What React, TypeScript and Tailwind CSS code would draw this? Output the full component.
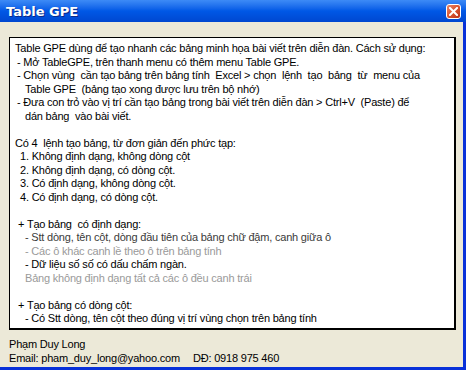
type Line = { text: string; indent: number; tone?: 'dim' | 'soft' };

const lines: Line[] = [
  { text: 'Table GPE dùng để tạo nhanh các bảng minh họa bài viết trên diễn đàn. Cách sử dụng:', indent: 0 },
  { text: '- Mở TableGPE, trên thanh menu có thêm menu Table GPE.', indent: 2 },
  { text: '- Chọn vùng  cần tạo bảng trên bảng tính  Excel > chọn  lệnh  tạo  bảng  từ  menu của', indent: 2 },
  { text: 'Table GPE  (bảng tạo xong được lưu trên bộ nhớ)', indent: 10 },
  { text: '- Đưa con trỏ vào vị trí cần tạo bảng trong bài viết trên diễn đàn > Ctrl+V  (Paste) để', indent: 2 },
  { text: 'dán bảng  vào bài viết.', indent: 10 },
  { text: '', indent: 0 },
  { text: 'Có 4  lệnh tạo bảng, từ đơn giản đến phức tạp:', indent: 0 },
  { text: '1. Không định dạng, không dòng cột', indent: 5 },
  { text: '2. Không định dạng, có dòng cột.', indent: 5 },
  { text: '3. Có định dạng, không dòng cột.', indent: 5 },
  { text: '4. Có định dạng, có dòng cột.', indent: 5 },
  { text: '', indent: 0 },
  { text: '+ Tạo bảng  có định dạng:', indent: 3 },
  { text: '- Stt dòng, tên cột, dòng đầu tiên của bảng chữ đậm, canh giữa ô', indent: 10, tone: 'soft' },
  { text: '- Các ô khác canh lề theo ô trên bảng tính', indent: 10, tone: 'dim' },
  { text: '- Dữ liệu số số có dấu chấm ngàn.', indent: 10 },
  { text: 'Bảng không định dạng tất cả các ô đều canh trái', indent: 10, tone: 'dim' },
  { text: '', indent: 0 },
  { text: '+ Tạo bảng có dòng cột:', indent: 3 },
  { text: '- Có Stt dòng, tên cột theo đúng vị trí vùng chọn trên bảng tính', indent: 10 },
];

function CloseButton() {
  return (
    <div className="w-[15px] h-[15px] rounded-[3px] border border-white bg-gradient-to-br from-[#e9876a] via-[#d9542e] to-[#b8301a] flex items-center justify-center">
      <svg width="9" height="9" viewBox="0 0 9 9">
        <path d="M1 1 L8 8 M8 1 L1 8" stroke="white" strokeWidth="2" strokeLinecap="square" />
      </svg>
    </div>
  );
}

export default function App() {
  return (
    <div className="w-[466px] h-[370px] bg-[#0831d9] flex flex-col overflow-hidden" style={{ fontFamily: '"Liberation Sans", Arial, sans-serif' }}>
      {/* Title bar */}
      <div className="h-[22px] shrink-0 flex items-center justify-between pl-[6px] pr-[5px] bg-gradient-to-b from-[#3d8bf6] via-[#0058e6] to-[#0047d0]">
        <span
          className="text-white font-bold text-[13px] leading-none"
          style={{ fontFamily: '"DejaVu Sans", sans-serif', textShadow: '1px 1px 0 #0b2a8a' }}
        >
          Table GPE
        </span>
        <CloseButton />
      </div>

      {/* Body */}
      <div className="flex-1 mr-[3px] mb-[3px] bg-[#ece9d8] pt-[15px] pl-[9px] flex flex-col tracking-[-0.2px]">
        <div className="w-[447px] h-[293px] border border-black border-r-2 border-b-2 bg-white pt-[4px] pl-[5px] text-[11px] leading-[13.5px] text-black">
          {lines.map((l, i) => (
            <div
              key={i}
              className={`h-[13.5px] whitespace-pre ${l.tone === 'dim' ? 'text-[#9a9a9a]' : l.tone === 'soft' ? 'text-[#3a3a3a]' : ''}`}
              style={{ paddingLeft: l.indent }}
            >
              {l.text}
            </div>
          ))}
        </div>

        <div className="mt-[8px] text-[11px] leading-[13.5px] text-black">
          <div>Phạm Duy Long</div>
          <div className="flex">
            <span className="w-[184px]">Email: pham_duy_long@yahoo.com</span>
            <span>DĐ: 0918 975 460</span>
          </div>
        </div>
      </div>
    </div>
  );
}
